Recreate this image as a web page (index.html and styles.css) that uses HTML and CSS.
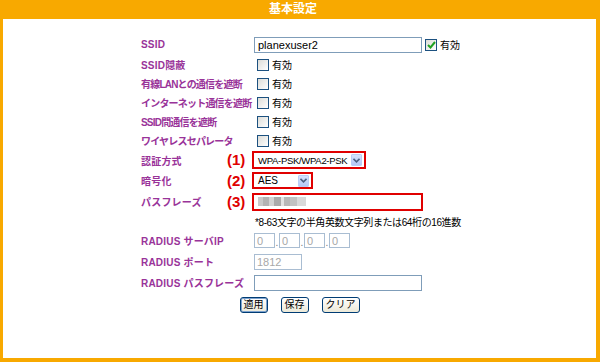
FILE: index.html
```html
<!DOCTYPE html>
<html>
<head>
    <meta charset="utf-8">
    <link rel="stylesheet" href="styles.css">
</head>
<body>
    <div class="frame">
        <div class="title">基本設定</div>
        <div class="content">
            <div class="form">
                <div class="label">SSID</div>
                <div class="field">
                    <input type="text" class="text wide" value="planexuser2">
                    <span class="check checked"><svg width="9" height="8" viewBox="0 0 9 8"><polyline points="1,4 3.5,6.5 8,1" fill="none" stroke="#21a121" stroke-width="2"/></svg></span>
                    <span class="opt">有効</span>
                </div>

                <div class="label">SSID隠蔽</div>
                <div class="field"><span class="check first"></span><span class="opt">有効</span></div>

                <div class="label tight">有線LANとの通信を遮断</div>
                <div class="field"><span class="check first"></span><span class="opt">有効</span></div>

                <div class="label tight">インターネット通信を遮断</div>
                <div class="field"><span class="check first"></span><span class="opt">有効</span></div>

                <div class="label tight">SSID間通信を遮断</div>
                <div class="field"><span class="check first"></span><span class="opt">有効</span></div>

                <div class="label tight">ワイヤレスセパレータ</div>
                <div class="field"><span class="check first"></span><span class="opt">有効</span></div>

                <div class="label">認証方式</div>
                <div class="field">
                    <span class="marker">(1)</span>
                    <div class="select auth">
                        <span class="value">WPA-PSK/WPA2-PSK</span>
                        <span class="arrow"><svg width="7" height="5" viewBox="0 0 7 5"><polyline points="0.5,0.8 3.5,3.8 6.5,0.8" fill="none" stroke="#4d6185" stroke-width="1.6"/></svg></span>
                    </div>
                </div>

                <div class="label">暗号化</div>
                <div class="field">
                    <span class="marker">(2)</span>
                    <div class="select cipher">
                        <span class="value">AES</span>
                        <span class="arrow"><svg width="7" height="5" viewBox="0 0 7 5"><polyline points="0.5,0.8 3.5,3.8 6.5,0.8" fill="none" stroke="#4d6185" stroke-width="1.6"/></svg></span>
                    </div>
                </div>

                <div class="label">パスフレーズ</div>
                <div class="field">
                    <span class="marker">(3)</span>
                    <div class="secret"><span class="blur"></span></div>
                </div>

                <div class="label"></div>
                <div class="field note">*8-63文字の半角英数文字列または64桁の16進数</div>

                <div class="label">RADIUS サーバIP</div>
                <div class="field">
                    <input type="text" class="text ip off" value="0"><span class="dot">.</span><input type="text" class="text ip off" value="0"><span class="dot">.</span><input type="text" class="text ip off" value="0"><span class="dot">.</span><input type="text" class="text ip off" value="0">
                </div>

                <div class="label">RADIUS ポート</div>
                <div class="field"><input type="text" class="text port off" value="1812"></div>

                <div class="label">RADIUS パスフレーズ</div>
                <div class="field"><input type="text" class="text wide" value=""></div>
            </div>

            <div class="buttons">
                <button class="btn focus">適用</button>
                <button class="btn">保存</button>
                <button class="btn">クリア</button>
            </div>
        </div>
    </div>
</body>
</html>
```

FILE: styles.css
```css
body {
    margin: 0;
    padding: 0;
    background-color: #fff;
    font-family: "Liberation Sans", "Noto Sans CJK JP", sans-serif;
}

.frame {
    width: 600px;
    height: 362px;
    box-sizing: border-box;
    background-color: #f8a900;
    display: flex;
    flex-direction: column;
}

.title {
    height: 19px;
    line-height: 19px;
    text-align: center;
    padding-right: 14px;
    color: #fff;
    font-size: 12px;
    font-weight: bold;
}

.content {
    flex: 1;
    margin: 0 4px 4px 3px;
    background-color: #fff;
    padding-top: 15px;
}

.form {
    display: grid;
    grid-template-columns: 111px 1fr;
    grid-template-rows: 21px 19px 19px 19px 19px 19px 20px 21px 21px 18px 21px 21px 21px;
    align-items: center;
    margin-left: 138px;
}

.label {
    color: #993399;
    font-size: 10px;
    font-weight: bold;
    letter-spacing: 0.2px;
    white-space: nowrap;
}

.label.tight {
    letter-spacing: -0.8px;
}

.field {
    position: relative;
    display: flex;
    align-items: center;
    font-size: 10px;
    color: #000;
}

.text {
    box-sizing: border-box;
    height: 16px;
    margin: 0 0 0 2px;
    padding: 0 3px;
    border: 1px solid #7f9db9;
    font-family: "Liberation Sans", sans-serif;
    font-size: 11px;
    color: #000;
    outline: none;
}

.wide {
    width: 168px;
}

.ip {
    width: 21px;
    height: 15px;
}

.ip + .dot + .ip {
    margin-left: 0;
}

.dot {
    width: 4px;
    align-self: flex-end;
    line-height: 10px;
    color: #777;
    text-align: center;
    font-size: 10px;
}

.port {
    width: 48px;
}

.off {
    border-color: #a9bdd2;
    color: #a8a8a8;
    padding: 0 2px;
}

.check {
    box-sizing: border-box;
    width: 12px;
    height: 12px;
    margin-left: 3px;
    border: 1px solid #1c5180;
    background: linear-gradient(135deg, #dcdcd7, #fff);
    display: flex;
    align-items: center;
    justify-content: center;
}

.check.first {
    margin-left: 5px;
}

.opt {
    margin-left: 3px;
}

.marker {
    position: absolute;
    left: -25px;
    top: 50%;
    transform: translateY(-52%);
    color: #e00000;
    font-size: 15px;
    font-weight: bold;
}

.select {
    box-sizing: border-box;
    height: 18px;
    border: 2px solid #e00000;
    display: flex;
    align-items: center;
    justify-content: space-between;
    padding: 0 2px 0 4px;
    font-size: 9.5px;
    letter-spacing: -0.3px;
    white-space: nowrap;
}

.select.auth {
    width: 114px;
}

.select.cipher {
    width: 61px;
    height: 17px;
    font-size: 10px;
    letter-spacing: 0;
}

.arrow {
    box-sizing: border-box;
    flex: none;
    width: 11px;
    height: 12px;
    border: 1px solid #b9cdf7;
    border-radius: 1px;
    background: linear-gradient(#d6e2fd, #b4c8f6);
    display: flex;
    align-items: center;
    justify-content: center;
}

.secret {
    box-sizing: border-box;
    width: 171px;
    height: 18px;
    border: 2px solid #e00000;
    display: flex;
    align-items: center;
    padding-left: 4px;
}

.blur {
    width: 48px;
    height: 9px;
    background: linear-gradient(90deg, #c9c9c9 0 5px, #b3b3b3 5px 11px, #d2d2d2 11px 16px, #aaaaaa 16px 23px, #e3e3e3 23px 26px, #b8b8b8 26px 32px, #c2c2c2 32px 39px, #d9d9d9 39px 48px);
}

.note {
    padding-left: 3px;
    letter-spacing: -0.4px;
    white-space: nowrap;
}

.buttons {
    display: flex;
    justify-content: center;
    gap: 13px;
    margin-top: 4px;
}

.btn {
    box-sizing: border-box;
    height: 16px;
    padding: 0 3px;
    border: 1px solid #003c74;
    border-radius: 3px;
    background: linear-gradient(#ffffff, #ece9d8);
    font-family: "Liberation Sans", "Noto Sans CJK JP", sans-serif;
    font-size: 10px;
    line-height: 14px;
    color: #000;
}

.btn.focus {
    box-shadow: inset 0 0 0 1px #7da2ce;
}
```
